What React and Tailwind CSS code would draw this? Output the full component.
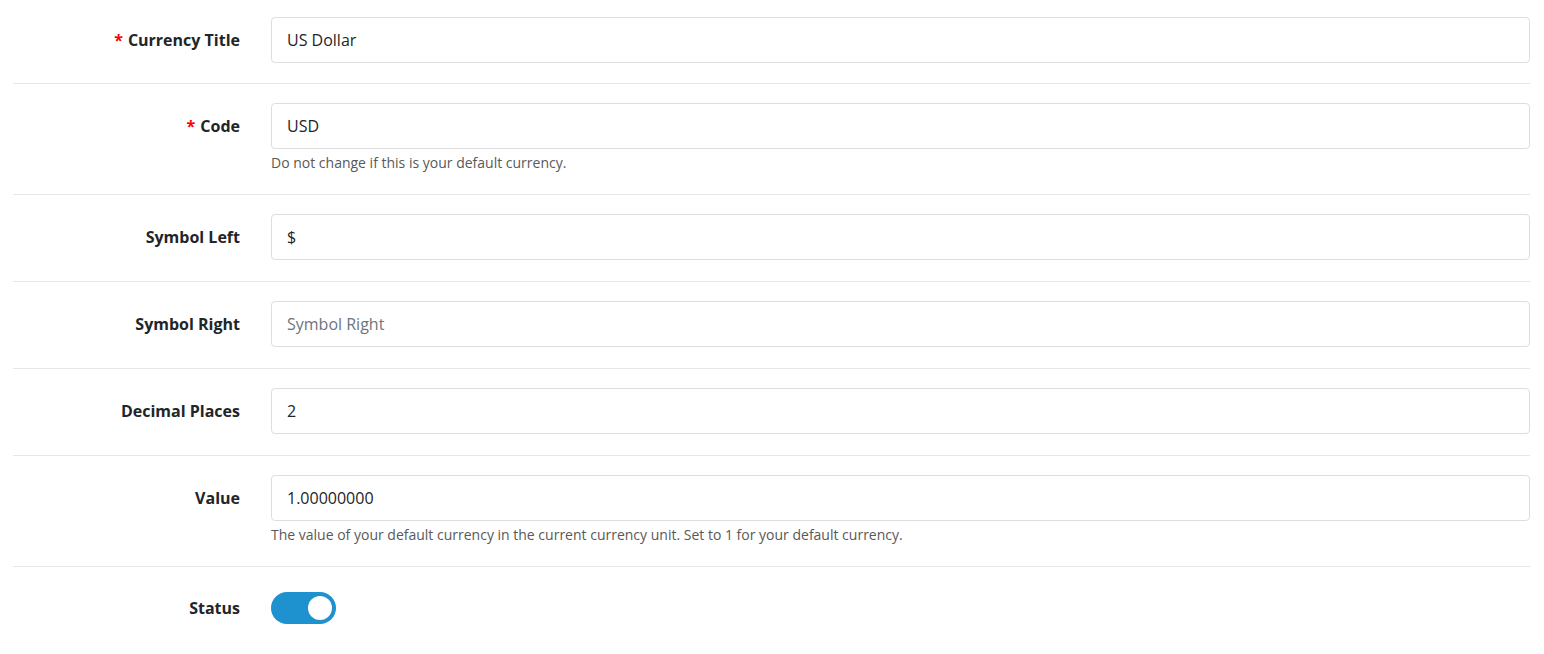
import React, { useState } from "react";

const rows = [
  { label: "Currency Title", required: true, value: "US Dollar" },
  {
    label: "Code",
    required: true,
    value: "USD",
    help: "Do not change if this is your default currency.",
  },
  { label: "Symbol Left", value: "$" },
  { label: "Symbol Right", value: "", placeholder: "Symbol Right" },
  { label: "Decimal Places", value: "2" },
  {
    label: "Value",
    value: "1.00000000",
    help: "The value of your default currency in the current currency unit. Set to 1 for your default currency.",
  },
];

const Field = ({ row }) => {
  const [value, setValue] = useState(row.value);

  return (
    <div className="flex border-b border-[#e6e6e6] pt-[17px] pb-[20px] [&:not(:first-child)]:pt-[19px] [&:not(:first-child)]:pb-[21px]">
      <label className="w-[258px] shrink-0 pr-[31px] h-[46px] flex items-center justify-end text-[16px] font-bold text-[#212529]">
        {row.required && <span className="text-[#f00] mr-[5px]">*</span>}
        {row.label}
      </label>
      <div className="flex-1">
        <input
          type="text"
          value={value}
          placeholder={row.placeholder}
          onChange={(e) => setValue(e.target.value)}
          className="w-full h-[46px] px-[15px] bg-white border border-[#dedede] rounded-[4px] text-[16px] text-[#212529] placeholder-[#6c757d] focus:outline-none"
        />
        {row.help && (
          <p className="mt-[3px] text-[14px] leading-[21px] text-[#595959]">
            {row.help}
          </p>
        )}
      </div>
    </div>
  );
};

const App = () => {
  const [status, setStatus] = useState(true);

  return (
    <div
      className="w-full bg-white px-[13px] pr-[14px]"
      style={{ fontFamily: '"Open Sans", sans-serif' }}
    >
      {rows.map((row) => (
        <Field key={row.label} row={row} />
      ))}

      <div className="flex pt-[25px] pb-[20px]">
        <label className="w-[258px] shrink-0 pr-[31px] h-[32px] flex items-center justify-end text-[16px] font-bold text-[#212529]">
          Status
        </label>
        <button
          type="button"
          onClick={() => setStatus(!status)}
          className={`w-[65px] h-[32px] rounded-full flex items-center px-[4px] ${
            status ? "bg-[#1e91cf] justify-end" : "bg-[#dedede] justify-start"
          }`}
        >
          <span className="w-[24px] h-[24px] rounded-full bg-white block" />
        </button>
      </div>
    </div>
  );
};

export default App;
